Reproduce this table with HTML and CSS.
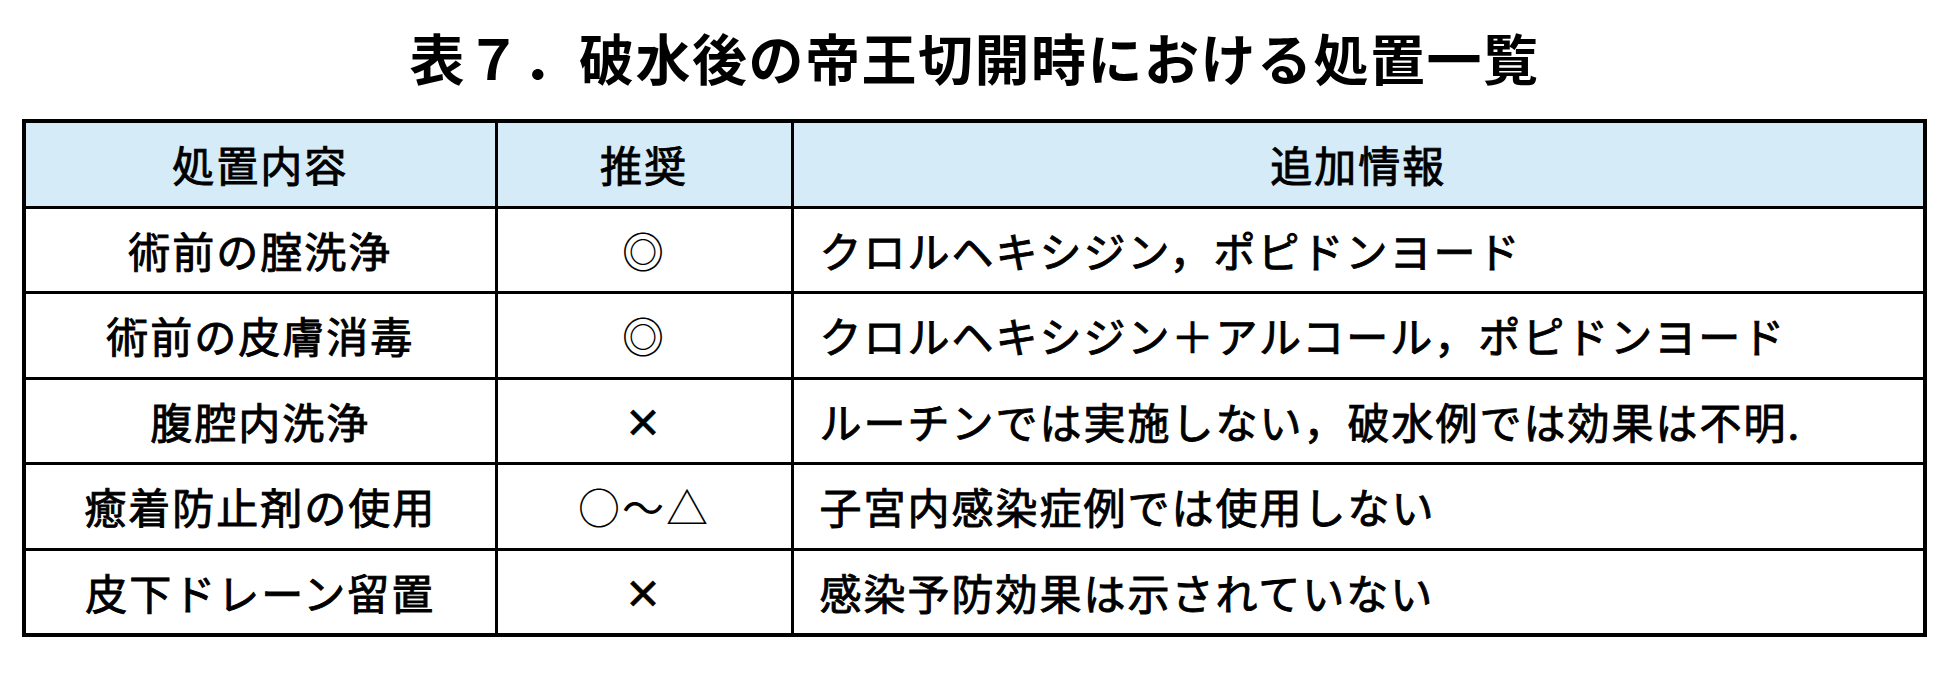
FILE: index.html
```html
<!DOCTYPE html>
<html lang="ja">
<head>
<meta charset="utf-8">
<title>表７．破水後の帝王切開時における処置一覧</title>
<link rel="stylesheet" href="styles.css">
</head>
<body>
<div class="page">
  <h1 class="title">表７．破水後の帝王切開時における処置一覧</h1>
  <table class="tbl">
    <colgroup>
      <col class="c1">
      <col class="c2">
      <col class="c3">
    </colgroup>
    <thead>
      <tr>
        <th>処置内容</th>
        <th>推奨</th>
        <th>追加情報</th>
      </tr>
    </thead>
    <tbody>
      <tr>
        <td class="name">術前の腟洗浄</td>
        <td class="rec">◎</td>
        <td class="info">クロルヘキシジン，ポピドンヨード</td>
      </tr>
      <tr>
        <td class="name">術前の皮膚消毒</td>
        <td class="rec">◎</td>
        <td class="info">クロルヘキシジン＋アルコール，ポピドンヨード</td>
      </tr>
      <tr>
        <td class="name">腹腔内洗浄</td>
        <td class="rec cross">×</td>
        <td class="info">ルーチンでは実施しない，破水例では効果は不明.</td>
      </tr>
      <tr>
        <td class="name">癒着防止剤の使用</td>
        <td class="rec">○～△</td>
        <td class="info">子宮内感染症例では使用しない</td>
      </tr>
      <tr>
        <td class="name">皮下ドレーン留置</td>
        <td class="rec cross">×</td>
        <td class="info">感染予防効果は示されていない</td>
      </tr>
    </tbody>
  </table>
</div>
</body>
</html>
```

FILE: styles.css
```css
html, body {
  margin: 0;
  padding: 0;
  background: #ffffff;
}

body {
  font-family: "Noto Sans CJK JP", "Noto Sans", sans-serif;
  color: #000000;
}

.page {
  width: 1949px;
  padding: 0 22px;
  box-sizing: border-box;
}

.title {
  margin: 0;
  height: 119px;
  display: flex;
  align-items: center;
  justify-content: center;
  font-size: 55px;
  font-weight: 700;
  letter-spacing: 1.5px;
  line-height: 1;
  padding-bottom: 6px;
  box-sizing: border-box;
}

.tbl {
  width: 1905px;
  border-collapse: collapse;
  table-layout: fixed;
  border: 4px solid #000;
}

.c1 { width: 472px; }
.c2 { width: 296px; }
.c3 { width: auto; }

.tbl th,
.tbl td {
  height: 82.5px;
  padding: 0;
  border: 3px solid #000;
  font-size: 42px;
  font-weight: 400;
  letter-spacing: 2px;
  line-height: 1;
  vertical-align: middle;
  -webkit-text-stroke: 0.9px #000;
}

.tbl th {
  background: #d5ebf8;
  text-align: center;
}

.tbl td.name,
.tbl td.rec {
  text-align: center;
}

.tbl td.rec {
  -webkit-text-stroke: 0;
}

.tbl td.cross {
  font-weight: 700;
  font-size: 38px;
  -webkit-text-stroke: 0.6px #000;
}

.tbl td.info {
  text-align: left;
  padding-left: 26px;
}
```
